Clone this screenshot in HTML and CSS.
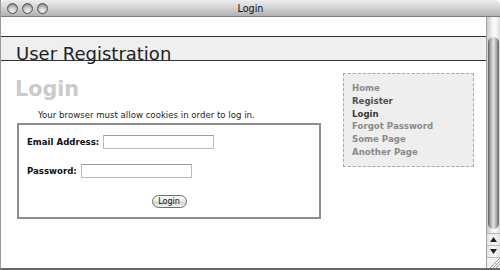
FILE: index.html
```html
<!DOCTYPE html>
<html>
<head>
<meta charset="utf-8">
<title>Login</title>
<link rel="stylesheet" href="styles.css">
</head>
<body>
<div class="window">
  <div class="titlebar">
    <div class="lights">
      <span class="light"></span>
      <span class="light"></span>
      <span class="light"></span>
    </div>
    <div class="title">Login</div>
    <div></div>
  </div>
  <div class="viewport">
    <div class="page">
      <div class="header">
        <h1>User Registration</h1>
      </div>
      <div class="content">
        <div class="main">
          <h2>Login</h2>
          <p class="note">Your browser must allow cookies in order to log in.</p>
          <form class="login-box" action="#" method="POST">
            <div class="row">
              <label for="email">Email Address:</label>
              <input type="text" id="email" name="email">
            </div>
            <div class="row">
              <label for="pass">Password:</label>
              <input type="password" id="pass" name="pass">
            </div>
            <div class="row row-center">
              <button type="button">Login</button>
            </div>
          </form>
        </div>
        <div class="sidebar">
          <ul>
            <li><a href="#">Home</a></li>
            <li><a href="#" class="visited">Register</a></li>
            <li><a href="#" class="current">Login</a></li>
            <li><a href="#">Forgot Password</a></li>
            <li><a href="#">Some Page</a></li>
            <li><a href="#">Another Page</a></li>
          </ul>
        </div>
      </div>
    </div>
    <div class="scrollbar">
      <div class="sb-track"><div class="sb-thumb"></div></div>
      <div class="sb-btn">
        <svg width="7" height="5" viewBox="0 0 7 5"><polygon points="3.5,0 7,5 0,5" fill="#222"/></svg>
      </div>
      <div class="sb-btn">
        <svg width="7" height="5" viewBox="0 0 7 5"><polygon points="0,0 7,0 3.5,5" fill="#222"/></svg>
      </div>
      <div class="sb-grip">
        <svg width="12" height="11" viewBox="0 0 12 11">
          <line x1="2" y1="11" x2="12" y2="1" stroke="#9a9a9a" stroke-width="1"/>
          <line x1="5" y1="11" x2="12" y2="4" stroke="#9a9a9a" stroke-width="1"/>
          <line x1="8" y1="11" x2="12" y2="7" stroke="#9a9a9a" stroke-width="1"/>
        </svg>
      </div>
    </div>
  </div>
</div>
</body>
</html>
```

FILE: styles.css
```css
html, body {
  margin: 0;
  padding: 0;
  background-color: #fff;
}

body {
  font-family: "DejaVu Sans", Verdana, sans-serif;
}

.window {
  width: 500px;
  height: 270px;
  box-sizing: border-box;
  border-left: 1px solid #999;
  border-bottom: 2px solid #666;
  display: flex;
  flex-direction: column;
  overflow: hidden;
}

.titlebar {
  height: 16px;
  flex: none;
  border-bottom: 1px solid #7c7c7c;
  border-radius: 5px 5px 0 0;
  background: linear-gradient(#ededed, #d6d6d6 45%, #c4c4c4 70%, #b2b2b2);
  display: grid;
  grid-template-columns: 1fr auto 1fr;
  align-items: center;
}

.lights {
  display: flex;
  gap: 4px;
  padding-left: 6px;
}

.light {
  width: 11px;
  height: 11px;
  box-sizing: border-box;
  border-radius: 50%;
  border: 1px solid #555;
  background: radial-gradient(circle at 50% 78%, #f6f6f6, #c2c2c2 50%, #6c6c6c 100%);
}

.title {
  font-size: 9.6px;
  color: #111;
  padding-top: 1px;
}

.viewport {
  flex: 1;
  min-height: 0;
  display: flex;
}

.page {
  flex: 1;
  padding-top: 19px;
}

.header {
  height: 23px;
  border-top: 1px solid #333;
  border-bottom: 1px solid #333;
  background-color: #efefef;
}

h1 {
  margin: 0;
  padding: 8px 0 0 15px;
  font-size: 18px;
  font-weight: normal;
  line-height: 18px;
  color: #222;
  white-space: nowrap;
}

.content {
  display: flex;
  align-items: flex-start;
}

.main {
  width: 304px;
  margin-left: 16px;
}

h2 {
  margin: 16px 0 0 -2px;
  font-size: 20.7px;
  line-height: 24px;
  color: #cbcbcb;
}

.note {
  margin: 8px 0 2px 21px;
  font-size: 8.6px;
  line-height: 12px;
  color: #222;
}

.login-box {
  margin: 0;
  border: 2px solid #8e8e8e;
  padding: 10px 8px 9px;
  display: flex;
  flex-direction: column;
  gap: 15px;
}

.row {
  display: flex;
  align-items: center;
  font-size: 8.6px;
  font-weight: bold;
  color: #111;
}

.row label {
  margin-right: 4px;
  line-height: 12px;
}

.row input {
  width: 111px;
  height: 14px;
  box-sizing: border-box;
  margin: 0;
  padding: 0 2px;
  border: 1px solid #bcbcbc;
  border-top-color: #9c9c9c;
  font-size: 8px;
}

.row-center {
  justify-content: center;
  margin-top: 2px;
}

button {
  width: 35px;
  height: 13px;
  box-sizing: border-box;
  padding: 0;
  border: 1px solid #6e6e6e;
  border-radius: 7px;
  background: linear-gradient(#ffffff, #e6e6e6 50%, #d2d2d2 55%, #f2f2f2);
  font-family: "DejaVu Sans", Verdana, sans-serif;
  font-size: 8px;
  line-height: 11px;
  color: #111;
}

.sidebar {
  width: 131px;
  box-sizing: border-box;
  margin: 12px 0 0 22px;
  border: 1px dashed #a8a8a8;
  background-color: #eee;
  padding: 8px 0 7px 8px;
}

.sidebar ul {
  list-style: none;
  margin: 0;
  padding: 0;
}

.sidebar li {
  font-size: 8.6px;
  line-height: 12.8px;
  font-weight: bold;
}

.sidebar a {
  color: #8a8a8a;
  text-decoration: none;
}

.sidebar a.visited {
  color: #505050;
}

.sidebar a.current {
  color: #383838;
}

.scrollbar {
  width: 13px;
  flex: none;
  border-left: 1px solid #a4a4a4;
  display: flex;
  flex-direction: column;
}

.sb-track {
  flex: 1;
  display: flex;
  padding: 20px 1px 4px;
  background: linear-gradient(to right, #c8c8c8, #efefef 35%, #fdfdfd 60%, #dcdcdc);
}

.sb-thumb {
  flex: 1;
  border-radius: 6px;
  background: linear-gradient(to right, #5e5e5e, #a8a8a8 22%, #e4e4e4 50%, #a8a8a8 78%, #5e5e5e);
}

.sb-btn {
  height: 12px;
  box-sizing: border-box;
  border-top: 1px solid #b8b8b8;
  display: flex;
  align-items: center;
  justify-content: center;
  background: linear-gradient(to right, #e2e2e2, #fafafa 50%, #e2e2e2);
}

.sb-grip {
  height: 11px;
  box-sizing: border-box;
  border-top: 1px solid #b8b8b8;
  background-color: #f2f2f2;
  display: flex;
  justify-content: flex-end;
  align-items: flex-end;
  overflow: hidden;
}

.sb-grip svg {
  display: block;
}
```
